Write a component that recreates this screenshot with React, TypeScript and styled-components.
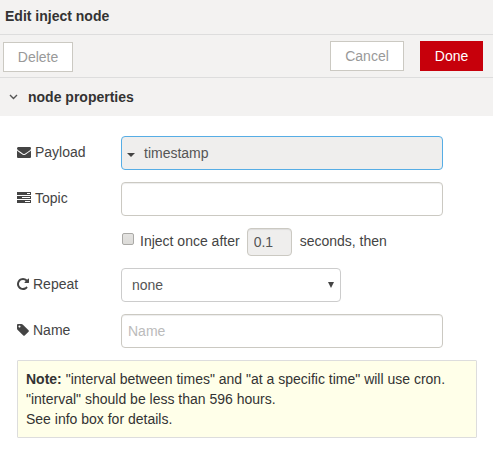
import React from "react";
import styled, { createGlobalStyle } from "styled-components";

const GlobalStyle = createGlobalStyle`
  *, *::before, *::after { box-sizing: border-box; }
  body {
    margin: 0;
    background: #fff;
    color: #444;
    font: 14px/20px "Liberation Sans", Arial, sans-serif;
  }
  input, button, select { font: inherit; }
`;

const Editor = styled.main`
  width: 493px;
  height: 450px;
  overflow: hidden;
`;

const TitleBar = styled.header`
  height: 35px;
  padding: 6px 5px;
  background: #f3f2f1;
  border-bottom: 1px solid #ddd;
  color: #333;
  font-weight: bold;
`;

const Toolbar = styled.div`
  display: flex;
  align-items: flex-start;
  height: 43px;
  padding: 6px 10px 0 3px;
  background: #f3f2f1;
  border-bottom: 1px solid #ddd;
`;

const ToolButton = styled.button<{ $width: number; $primary?: boolean }>`
  width: ${(p) => p.$width}px;
  height: 30px;
  padding: 0;
  border: 1px solid ${(p) => (p.$primary ? "#c7000b" : "#cbc9c2")};
  background: ${(p) => (p.$primary ? "#c7000b" : "#fff")};
  color: ${(p) => (p.$primary ? "#fff" : "#999")};
`;

const DeleteButton = styled(ToolButton)`
  margin-top: 1px;
  margin-right: auto;
`;

const DoneButton = styled(ToolButton)`
  margin-left: 16px;
`;

const SectionHeader = styled.div`
  display: flex;
  align-items: center;
  gap: 10px;
  height: 38px;
  padding-left: 9px;
  background: #f3f2f1;
  color: #333;
  font-weight: bold;
`;

const Form = styled.form`
  display: flex;
  flex-direction: column;
  gap: 12px;
  padding: 20px 16px 0 17px;
`;

const Row = styled.div`
  display: flex;
  height: 34px;
`;

const Label = styled.label`
  display: flex;
  align-items: center;
  gap: 4px;
  width: 104px;
  height: 32px;
`;

const Field = styled.input`
  width: 322px;
  height: 34px;
  padding: 0 6px 1px;
  border: 1px solid #cbc9c2;
  border-radius: 4px;
  background: #fff;
  box-shadow: inset 0 1px 1px rgba(0, 0, 0, 0.075);
  color: #555;
  outline: none;
  &::placeholder { color: #bbb; opacity: 1; }
`;

const TypedField = styled.div`
  display: flex;
  align-items: center;
  width: 322px;
  height: 34px;
  padding-left: 5px;
  border: 1px solid #56ade5;
  border-radius: 4px;
  background: #efeeed;
  color: #555;
`;

const Caret = styled.svg`
  width: 8px;
  height: 4px;
  margin: 4px 9px 0 0;
  fill: #444;
`;

const OnceRow = styled.div`
  display: flex;
  height: 28px;
  padding-left: 104px;
`;

const Checkbox = styled.input`
  appearance: none;
  width: 12px;
  height: 12px;
  margin: 5px 6px 0 1px;
  border: 1px solid #aaa9a6;
  border-radius: 2px;
  background: linear-gradient(#e4e3e1, #dcdbd8);
`;

const DelayField = styled(Field)`
  width: 45px;
  height: 28px;
  margin: 0 8px 0 7px;
  background: #efeeed;
`;

const OnceText = styled.span`
  padding-top: 3px;
`;

const SelectBox = styled.div`
  display: flex;
  align-items: center;
  justify-content: space-between;
  width: 220px;
  height: 34px;
  padding: 0 6px 0 10px;
  border: 1px solid #ccc;
  border-radius: 4px;
  color: #555;
`;

const Arrow = styled.svg`
  width: 6px;
  height: 6px;
  fill: #444;
`;

const Note = styled.p`
  width: 460px;
  height: 78px;
  margin: 0;
  padding: 8px;
  border: 1px solid #ddd;
  border-radius: 1px;
  background: #ffffe9;
  color: #333;
`;

const Glyph = styled.svg<{ $w: number }>`
  width: ${(p) => p.$w}px;
  height: 14px;
  fill: #444;
`;

const Chevron = styled.svg`
  width: 9px;
  height: 6px;
  fill: none;
  stroke: #555;
  stroke-width: 1.4;
`;

const icons = {
  envelope: {
    width: 14,
    viewBox: "0 0 1792 1792",
    path: "M1792 710v794q0 66-47 113t-113 47h-1472q-66 0-113-47t-47-113v-794q44 49 101 87 362 246 497 345 57 42 92.5 65.5t94.5 48 110 24.5h2q51 0 110-24.5t94.5-48 92.5-65.5q170-123 498-345 57-39 100-87zm0-294q0 79-49 151t-122 123q-376 261-468 325-10 7-42.5 31t-54 38.5-52 32.5-57.5 27-50 9h-2q-23 0-50-9t-57.5-27-52-32.5-54-38.5-42.5-31q-91-64-262-182.5t-205-142.5q-62-42-117-115.5t-55-136.5q0-78 41.5-130t118.5-52h1472q65 0 112.5 47t47.5 113z",
  },
  tasks: {
    width: 14,
    viewBox: "0 0 14 14",
    path: "M0 1h14v3H0zM10 2v1h3V2zM0 5h14v3H0zM5 6v1h8V6zM0 9h14v3H0zM8 10v1h5v-1z",
  },
  repeat: {
    width: 12,
    viewBox: "128 0 1536 1792",
    path: "M1664 256v448q0 26-19 45t-45 19h-448q-42 0-59-40-17-39 14-69l138-138q-148-137-349-137-104 0-198.5 40.5t-163.5 109.5-109.5 163.5-40.5 198.5 40.5 198.5 109.5 163.5 163.5 109.5 198.5 40.5q119 0 225-52t179-147q7-10 23-12 15 0 25 9l137 138q9 8 9.5 20.5t-7.5 22.5q-109 132-264 204.5t-327 72.5q-156 0-298-61t-245-164-164-245-61-298 61-298 164-245 245-164 298-61q147 0 284.5 55.5t244.5 156.5l130-129q29-31 70-14 39 17 39 59z",
  },
  tag: {
    width: 12,
    viewBox: "128 0 1536 1792",
    path: "M576 448q0-53-37.5-90.5t-90.5-37.5-90.5 37.5-37.5 90.5 37.5 90.5 90.5 37.5 90.5-37.5 37.5-90.5zm1067 576q0 53-37 90l-491 492q-39 37-91 37-53 0-90-37l-715-716q-38-37-64.5-101t-26.5-117v-416q0-52 38-90t90-38h416q53 0 117 26.5t102 64.5l715 714q37 39 37 91z",
  },
};

function Icon({ name }: { name: keyof typeof icons }) {
  const icon = icons[name];
  return (
    <Glyph $w={icon.width} viewBox={icon.viewBox} aria-hidden>
      <path d={icon.path} fillRule="evenodd" />
    </Glyph>
  );
}

export default function App() {
  return (
    <>
      <GlobalStyle />
      <Editor>
        <TitleBar>Edit inject node</TitleBar>
        <Toolbar>
          <DeleteButton $width={70}>Delete</DeleteButton>
          <ToolButton $width={74}>Cancel</ToolButton>
          <DoneButton $width={63} $primary>Done</DoneButton>
        </Toolbar>
        <SectionHeader>
          <Chevron viewBox="0 0 9 6"><path d="M1 1l3.5 3.5L8 1" /></Chevron>
          node properties
        </SectionHeader>
        <Form>
          <Row>
            <Label><Icon name="envelope" />Payload</Label>
            <TypedField>
              <Caret viewBox="0 0 8 4"><path d="M0 0h8L4 4z" /></Caret>
              timestamp
            </TypedField>
          </Row>
          <Row>
            <Label htmlFor="topic"><Icon name="tasks" />Topic</Label>
            <Field id="topic" />
          </Row>
          <OnceRow>
            <Checkbox type="checkbox" />
            <OnceText>Inject once after</OnceText>
            <DelayField defaultValue="0.1" />
            <OnceText>seconds, then</OnceText>
          </OnceRow>
          <Row>
            <Label><Icon name="repeat" />Repeat</Label>
            <SelectBox>
              none
              <Arrow viewBox="0 0 6 6"><path d="M0 0h6L3 6z" /></Arrow>
            </SelectBox>
          </Row>
          <Row>
            <Label htmlFor="name"><Icon name="tag" />Name</Label>
            <Field id="name" placeholder="Name" />
          </Row>
          <Note>
            <b>Note:</b> "interval between times" and "at a specific time" will use cron.
            <br />
            "interval" should be less than 596 hours.
            <br />
            See info box for details.
          </Note>
        </Form>
      </Editor>
    </>
  );
}
